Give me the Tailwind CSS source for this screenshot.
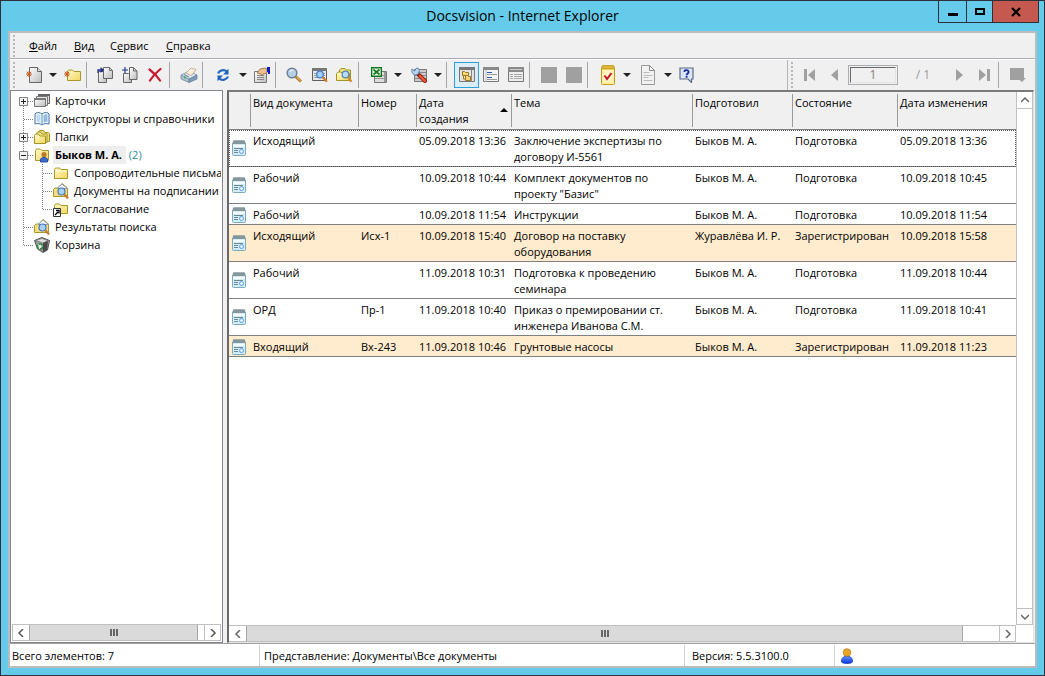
<!DOCTYPE html>
<html lang="ru">
<head>
<meta charset="utf-8">
<title>Docsvision - Internet Explorer</title>
<script src="https://cdn.jsdelivr.net/npm/@tailwindcss/browser@4"></script>
</head>
<body class="h-screen overflow-hidden font-['Open_Sans','Noto_Sans',sans-serif] text-[11px] leading-4 text-black">

<svg class="absolute h-0 w-0" aria-hidden="true" xmlns="http://www.w3.org/2000/svg">
  <defs>
    <linearGradient id="gFolder" x1="0" y1="0" x2="1" y2="1"><stop offset="0" stop-color="#fffbc8"/><stop offset="1" stop-color="#f2d662"/></linearGradient>
    <linearGradient id="gGray" x1="0" y1="0" x2="1" y2="1"><stop offset="0" stop-color="#fff"/><stop offset="1" stop-color="#bdbdbd"/></linearGradient>
    <linearGradient id="gBlue" x1="0" y1="0" x2="0" y2="1"><stop offset="0" stop-color="#5b8cff"/><stop offset="1" stop-color="#0a35d8"/></linearGradient>
  </defs>
  <!-- Tree guides -->
  <symbol id="g-first" viewBox="0 0 24 18"><path d="M12.5 14v4M17 9.500h7" stroke="#808080" stroke-dasharray="1 1" fill="none"/><path d="M8.500 5.500h8v8h-8z" fill="#f2f2f2" stroke="#848484"/><path d="M10 9.500h5M12.500 7v5" stroke="#222"/></symbol>
  <symbol id="g-plus" viewBox="0 0 24 18"><path d="M12.500 0v5M12.500 14v4M17 9.500h7" stroke="#808080" stroke-dasharray="1 1" fill="none"/><path d="M8.500 5.500h8v8h-8z" fill="#f2f2f2" stroke="#848484"/><path d="M10 9.500h5M12.500 7v5" stroke="#222"/></symbol>
  <symbol id="g-minus" viewBox="0 0 24 18"><path d="M12.500 0v5M12.500 14v4M17 9.500h7" stroke="#808080" stroke-dasharray="1 1" fill="none"/><path d="M8.500 5.500h8v8h-8z" fill="#f2f2f2" stroke="#848484"/><path d="M10 9.500h5" stroke="#222"/></symbol>
  <symbol id="g-mid" viewBox="0 0 24 18"><path d="M12.500 0v18M13 9.500h11" stroke="#808080" stroke-dasharray="1 1" fill="none"/></symbol>
  <symbol id="g-end" viewBox="0 0 24 18"><path d="M12.500 0v10M13 9.500h11" stroke="#808080" stroke-dasharray="1 1" fill="none"/></symbol>
  <symbol id="g-sub" viewBox="0 0 43 18"><path d="M12.500 0v18M31.500 0v18M32 9.500h11" stroke="#808080" stroke-dasharray="1 1" fill="none"/></symbol>
  <symbol id="g-subend" viewBox="0 0 43 18"><path d="M12.500 0v18M31.500 0v10M32 9.500h11" stroke="#808080" stroke-dasharray="1 1" fill="none"/></symbol>
  <!-- Tree icons -->
  <symbol id="cards" viewBox="0 0 16 16"><path d="M4.500 1.500h11v9h-11z" fill="#ddd" stroke="#666"/><path d="M4 1h12v2H4z" fill="#666"/><path d="M2.500 3.500h11v9h-11z" fill="#e8e8e8" stroke="#777"/><path d="M.5 5.500h11v8H.5z" fill="url(#gGray)" stroke="#777"/><path d="M0 5h12v2H0z" fill="#777"/></symbol>
  <symbol id="book" viewBox="0 0 16 16"><path d="M1 3l1-1c2-.8 4-.5 6 1 2-1.500 4-1.800 6-1l1 1v10c-3-.8-5-.5-7 1-2-1.500-4-1.800-7-1z" fill="#fff" stroke="#3e6fa5"/><path d="M2.500 3.500c2-.5 3 0 4 .8v7.500c-1-.7-2.500-1-4-.8z" fill="#b9dcf5"/><path d="M9.500 4.300c1-.8 2-1.200 4-.8V11c-1.500-.2-3 .1-4 .8z" fill="#8fbde6"/><path d="M8 3v11" stroke="#5b87b4"/></symbol>
  <symbol id="folders" viewBox="0 0 16 16"><path d="M4.500 12.500V3l1-1.500h4l1.500 2h3.500l1 1v8z" fill="#efe07c" stroke="#a39426"/><path d="M2.500 13.500V4.500l1-1.500h3l1.500 2h5v8.500z" fill="#f6e98e" stroke="#a39426"/><path d="M.5 14.500V6.500L1.500 5h3L6 7h5.500v7.500z" fill="url(#gFolder)" stroke="#a39426"/></symbol>
  <symbol id="folder" viewBox="0 0 16 16"><path d="M1.500 13.500V4.500l1-1.500h4l1.500 1.500h6.500v9z" fill="url(#gFolder)" stroke="#a8982a"/><path d="M3 6h10.500" stroke="#fffde0"/></symbol>
  <symbol id="userfolder" viewBox="0 0 16 16"><path d="M1.500 13.500V3.500L2.500 2h4L8 3.500h6.500v10z" fill="url(#gFolder)" stroke="#a8982a"/><circle cx="10" cy="7.500" r="2.600" fill="#bd7a2a"/><path d="M6.500 15v-2c0-1.800 1.500-2.500 3.500-2.500s3.500.7 3.500 2.500v2z" fill="#3c6bd0" stroke="#2a4fa0"/></symbol>
  <symbol id="searchfolder" viewBox="0 0 16 16"><path d="M.5 13.500V6.500L2 5h3l4-4.500L14.500 5v8.500z" fill="#f3df80" stroke="#a8982a"/><path d="M4 5.500l5-4.500 5.500 4.500z" fill="#f6f8fb" stroke="#8e9bb0"/><circle cx="8.500" cy="8.500" r="3.500" fill="#a9d0f8" stroke="#4b76b8" stroke-width="1.200"/><path d="M11.500 11.500l3.500 4" stroke="#c8772a" stroke-width="2"/></symbol>
  <symbol id="linkfolder" viewBox="0 0 16 16"><path d="M1.500 12.500V4.500l1-1.500h4l1.500 1.500h6.500v8z" fill="url(#gFolder)" stroke="#a8982a"/><path d="M.5 7.500h7v8h-7z" fill="#fff" stroke="#333"/><path d="M2 14l3-3M3 9.500h3v3" stroke="#000" stroke-width="1.300" fill="none"/></symbol>
  <symbol id="bin" viewBox="0 0 16 16"><path d="M.5 3.500L8 .5l7.500 3L13.500 13 9 15.500 3.500 12z" fill="#9a9a9a" stroke="#555"/><path d="M1.500 3.500L8 1.500l6 2-5 2.500z" fill="#dedede" stroke="#666" stroke-width=".6"/><path d="M9 6l5-2-1 9-4 2z" fill="#484848"/><circle cx="6" cy="9.500" r="2.500" fill="#e8e8e8" stroke="#248b3c" stroke-width="1.500" stroke-dasharray="4 1.200"/></symbol>
  <!-- Table icon -->
  <symbol id="row" viewBox="0 0 14 16"><path d="M.5 3.500h13v11q0 1-1 1h-11q-1 0-1-1z" fill="#d3edf7" stroke="#7eaabb"/><path d="M1 1q0-.8 1-.8h10q1 0 1 .8l.8 3.300H.2z" fill="#82989e"/><path d="M1 4.500h12v2.500H1z" fill="#f5fcff"/><path d="M2 8.500h9M2 10.500h4M2 12.500h4" stroke="#6f878f"/><circle cx="9.500" cy="11.500" r="2" fill="#e5f3ff" stroke="#5a9df5"/></symbol>
  <!-- Toolbar icons -->
  <symbol id="newdoc" viewBox="0 0 16 16"><path d="M3.500.5h8l4 4v11h-12z" fill="url(#gGray)" stroke="#666"/><path d="M11.500.5v4h4" fill="#ddd" stroke="#666"/><path d="M0 7h6M3 4v6M.8 4.800l4.400 4.400M5.200 4.800L.8 9.200" stroke="#c85a20"/></symbol>
  <symbol id="newfolder" viewBox="0 0 18 16"><path d="M3.500 13.500V4.500L4.500 3h4L10 4.500h6.500v9z" fill="url(#gFolder)" stroke="#a8982a"/><path d="M0 7h6M3 4v6M.8 4.800l4.400 4.400M5.200 4.800L.8 9.200" stroke="#c85a20"/></symbol>
  <symbol id="copyto" viewBox="0 0 16 16"><path d="M1.500 4.500h5l3 3v8h-8z" fill="url(#gGray)" stroke="#666"/><path d="M6.500.5h6l3 3v8h-9z" fill="url(#gGray)" stroke="#666"/><path d="M12.500.5v3h3" fill="none" stroke="#777"/><path d="M1 6V3h4M3.500.8L6 3 3.500 5.200" stroke="#1e2a8a" stroke-width="1.300" fill="none"/></symbol>
  <symbol id="copyadd" viewBox="0 0 16 16"><path d="M1.500 6.500h5l3 3v6h-8z" fill="url(#gGray)" stroke="#666"/><path d="M7.500.5h4l3.500 3.500v8.500H7.500z" fill="url(#gGray)" stroke="#666"/><path d="M11.500.5v3.500h3.500" fill="none" stroke="#666"/><path d="M0 3h6M3 0v6" stroke="#1e3a9a" stroke-width="1.200"/></symbol>
  <symbol id="del" viewBox="0 0 14 14"><path d="M1.500 1.500c4 3 7.500 6.500 10.500 11M12.500 1C8 4.500 4.500 8.500 2 12.500" stroke="#c81832" stroke-width="2.200" stroke-linecap="round" fill="none"/></symbol>
  <symbol id="print" viewBox="0 0 18 16"><path d="M1 8l8-4 8 4-8 4.500z" fill="#dbe6f0" stroke="#7890a8" stroke-width=".8"/><path d="M1 8v4l8 3.500V12z" fill="#aebfce" stroke="#7890a8" stroke-width=".8"/><path d="M17 8v4l-8 3.500V12z" fill="#7f9bb8" stroke="#65809c" stroke-width=".8"/><path d="M6 6l5-5 5 1.500-4.500 6z" fill="#fbeedc" stroke="#c0a080" stroke-width=".8"/><path d="M4 7.500l5 2.500" stroke="#5d7890"/><circle cx="5" cy="10.500" r="1" fill="#2fae3a"/></symbol>
  <symbol id="refresh" viewBox="0 0 14 14"><path d="M2 5.500C3 2.500 8 1 11 3.500M12 8.500c-1 3-6 4.500-9 2" stroke="#2468c0" stroke-width="2.200" fill="none"/><path d="M12.500.8v5.700H7zM1.500 13.200V7.500H7z" fill="#1f5fb8"/></symbol>
  <symbol id="props" viewBox="0 0 16 16"><path d="M.5 4.500h12v11H.5z" fill="url(#gGray)" stroke="#777"/><path d="M3 8.500h7M3 10.500h7M3 12.500h7" stroke="#888"/><path d="M3 6l3-4 5-1 2 1v4l-4 1-1 2-1-2z" fill="#edc08c" stroke="#9a6a3a" stroke-width=".8"/><path d="M13 0h3v7h-2V5h-1z" fill="#0a1cd8"/></symbol>
  <symbol id="zoom" viewBox="0 0 16 16"><circle cx="6" cy="6" r="4.800" fill="#b5cfe8" stroke="#6f7f93" stroke-width="1.500"/><path d="M3.500 5c.5-1.500 2-2 3.500-1.700" stroke="#fff" fill="none"/><path d="M9.500 9.500l5.500 5" stroke="#b07828" stroke-width="3"/><path d="M10.500 10l4 3.800" stroke="#f3c87a"/></symbol>
  <symbol id="zoomwin" viewBox="0 0 16 16"><path d="M.5 1.500h14v12H.5z" fill="#e8e8e8" stroke="#5e5e5e"/><path d="M0 1h15v3H0z" fill="#777"/><path d="M2 6.500h11M2 8.500h11M2 10.500h11" stroke="#999"/><circle cx="8" cy="7.500" r="3.300" fill="#9fd0ff" stroke="#4a80c8" stroke-width="1.300"/><path d="M10.800 10.300l4 4.500" stroke="#d87a20" stroke-width="2.200"/></symbol>
  <symbol id="zoomfolder" viewBox="0 0 17 16"><path d="M3.500 12.500V3L5 1.500h4L10.500 3h4v9z" fill="#efe07c" stroke="#a39426"/><path d="M.5 13.500V6.500L2 5h3l1.500 1.500h7v7z" fill="url(#gFolder)" stroke="#a39426"/><circle cx="9.500" cy="7.500" r="3.300" fill="#b7dcff" stroke="#5a86b8" stroke-width="1.300"/><path d="M12 10.300l3.500 4.500" stroke="#d8862a" stroke-width="2.200"/></symbol>
  <symbol id="excel" viewBox="0 0 16 16"><path d="M3.500 4.500h12v11h-12z" fill="#ddd" stroke="#777"/><path d="M4 8.500h11M4 11.500h11" stroke="#999"/><path d="M13 5h2v10h-2z" fill="#999"/><path d="M.7.7h9.600v8.600H.7z" fill="#fff" stroke="#0a7a18" stroke-width="1.400"/><path d="M2.500 2.500l6 5M8.500 2.500l-6 5" stroke="#0f7a1c" stroke-width="1.700"/></symbol>
  <symbol id="tools" viewBox="0 0 17 16"><path d="M3.500 2.500h12v12h-12z" fill="#ccc" stroke="#777"/><path d="M4 5.500h11M4 8.500h11M4 11.500h11" stroke="#888"/><path d="M8 8l6 6" stroke="#9b2014" stroke-width="4" stroke-linecap="round"/><path d="M9 9l5 5" stroke="#ee5b42" stroke-width="2.200" stroke-linecap="round"/><path d="M1 2l2.500 2L5.500 1C8 1 9 3 8 5L7 7 5 8C2.500 8 0 6 1 2z" fill="#b8d5ee" stroke="#587ea8"/></symbol>
  <symbol id="treeview" viewBox="0 0 16 16"><path d="M.5.500h15v14H.5z" fill="#e2e2e2" stroke="#777"/><path d="M0 0h16v3H0z" fill="#777"/><path d="M12.500 3v12" stroke="#888"/><path d="M3.500 8.500v-4h2l1 1h3v3zM6.500 13.500v-5h2l1 1h2v4z" fill="#f7d774" stroke="#a07a20"/><path d="M4.500 8.500v3.500h2" stroke="#a07a20" fill="none"/></symbol>
  <symbol id="listview" viewBox="0 0 16 16"><path d="M.5.500h15v14H.5z" fill="#f5f5f5" stroke="#777"/><path d="M0 0h16v3H0z" fill="#8a8a8a"/><path d="M3 3v12" stroke="#bbb"/><path d="M4 5.500h5M4 10.500h5" stroke="#2c55b0"/><path d="M4 7.500h10M4 12.500h10" stroke="#999"/></symbol>
  <symbol id="tableview" viewBox="0 0 16 16"><path d="M.5.500h15v14H.5z" fill="#ededed" stroke="#777"/><path d="M0 0h16v5H0z" fill="#8a8a8a"/><path d="M2 2.500h12" stroke="#ccc"/><path d="M2 7.500h3M6 7.500h8M2 9.500h3M6 9.500h8M2 11.500h3M6 11.500h8" stroke="#aaa"/></symbol>
  <symbol id="block" viewBox="0 0 16 16"><path d="M0 0h16v16H0z" fill="#a0a0a0"/></symbol>
  <symbol id="task" viewBox="0 0 14 20"><rect x=".5" y="2.500" width="13" height="17" rx="1" fill="#ffec94" stroke="#c99a18"/><path d="M2 5h10v12.500H2z" fill="#fff6bd"/><rect x="1" y=".5" width="12" height="3.500" rx="1" fill="#e0b830" stroke="#b88a18" stroke-width=".7"/><path d="M3.500 10.500L6 14l4.500-6" stroke="#c41430" stroke-width="2" fill="none"/></symbol>
  <symbol id="page" viewBox="0 0 14 20"><path d="M.5.500h8l5 5v14H.5z" fill="#f2f2f2" stroke="#999"/><path d="M8.500.5v5h5z" fill="#fff" stroke="#888"/><path d="M2.500 7.500h6M2.500 10.500h9M2.500 12.500h5M2.500 15.500h9" stroke="#bbb"/></symbol>
  <symbol id="help" viewBox="0 0 15 16"><path d="M1 1h13v11h-1.500v3.500L9 12H1z" fill="#dce6f7" stroke="#5c6c84" stroke-width="1.200"/><path d="M5.300 4.800C5.500 2.500 9.700 2.600 9.600 5c0 1.500-2 1.500-2 3.200M7.600 9v1.800" stroke="#1428a8" stroke-width="1.800" fill="none"/></symbol>
  <symbol id="more" viewBox="0 0 16 16"><path d="M0 1h14v10h2l-4 4-2.500-2H0z" fill="#a0a0a0"/></symbol>
  <symbol id="dd" viewBox="0 0 8 4"><path d="M0 0h8L4 4z" fill="#222"/></symbol>
  <symbol id="user" viewBox="0 0 12 16"><path d="M.5 14c-.5-3 1.500-5 3-5.500h5c1.500.5 3.500 2.500 3 5.500-2 2-9 2-11 0z" fill="url(#gBlue)" stroke="#1238b0" stroke-width=".7"/><circle cx="6" cy="4.500" r="3.800" fill="#e8a528" stroke="#b87a14" stroke-width=".7"/></symbol>
</svg>

<div class="flex h-full flex-col border border-[#2d3038] bg-[#66cbea]">
  <header class="relative flex h-[30px] shrink-0 items-center justify-center">
    <h1 class="text-[14px] leading-5">Docsvision - Internet Explorer</h1>
    <div class="absolute -top-px right-[5px] flex h-[23px] border border-[#2d3038]">
      <button aria-label="Свернуть" class="flex w-7 items-center justify-center border-r border-[#2d3038]"><svg class="h-4 w-4"><path d="M3 9h10v3H3z"/></svg></button>
      <button aria-label="Развернуть" class="flex w-[26px] items-center justify-center border-r border-[#2d3038]"><svg class="h-4 w-4"><path d="M4 5h8v5H4z" fill="none" stroke="#000" stroke-width="2"/></svg></button>
      <button aria-label="Закрыть" class="flex w-[45px] items-center justify-center bg-[#c5594f]"><svg class="h-4 w-4"><path d="M4 4l8 8M12 4l-8 8" stroke="#000" stroke-width="2.200"/></svg></button>
    </div>
  </header>

  <div class="mx-[7px] mb-[7px] flex min-h-0 flex-1 flex-col border-2 border-[#b9bdc0] bg-[#f0f0f0]">
    <nav class="flex h-[26px] shrink-0 items-center border-b border-[#a9adb3] pl-[3px]">
      <span class="mr-[13px] h-[22px] border-l-2 border-dotted border-[#b8b8b8]"></span>
      <button class="w-[46px] pl-px text-left"><u>Ф</u>айл</button>
      <button class="w-9 text-left"><u>В</u>ид</button>
      <button class="w-14 text-left">С<u>е</u>рвис</button>
      <button class="text-left"><u>С</u>правка</button>
    </nav>

    <div class="flex h-[31px] shrink-0 items-center border-t border-white pl-[3px]" role="toolbar">
      <span class="mr-[7px] h-[26px] border-l-2 border-dotted border-[#b8b8b8]"></span>
      <div class="flex items-center">
        <button aria-label="Создать" class="flex w-6 justify-center"><svg class="h-4 w-4"><use href="#newdoc"/></svg></button>
        <button aria-label="Меню создания" class="flex w-[14px] justify-center"><svg class="h-1 w-2"><use href="#dd"/></svg></button>
        <button aria-label="Новая папка" class="flex w-[26px] justify-center"><svg class="h-4 w-[18px]"><use href="#newfolder"/></svg></button>
      </div>
      <span class="h-[26px] w-px bg-[#a5a5a5]"></span>
      <div class="flex items-center pl-[6px] pr-px">
        <button aria-label="Копировать в" class="flex w-[25px] justify-center pr-px"><svg class="h-4 w-4"><use href="#copyto"/></svg></button>
        <button aria-label="Добавить копию" class="flex w-[25px] justify-center pr-px"><svg class="h-4 w-4"><use href="#copyadd"/></svg></button>
        <button aria-label="Удалить" class="flex w-[25px] justify-center pr-px"><svg class="h-[14px] w-[14px]"><use href="#del"/></svg></button>
      </div>
      <span class="h-[26px] w-px bg-[#a5a5a5]"></span>
      <button aria-label="Печать" class="ml-[7px] flex w-[25px] justify-center pr-px"><svg class="h-4 w-[18px]"><use href="#print"/></svg></button>
      <span class="h-[26px] w-px bg-[#a5a5a5]"></span>
      <div class="flex items-center pl-2">
        <button aria-label="Обновить" class="flex w-6 justify-center"><svg class="h-[14px] w-[14px]"><use href="#refresh"/></svg></button>
        <button aria-label="Меню обновления" class="flex w-4 justify-center"><svg class="h-1 w-2"><use href="#dd"/></svg></button>
        <button aria-label="Свойства" class="flex w-6 justify-center pr-[2px]"><svg class="h-4 w-4"><use href="#props"/></svg></button>
      </div>
      <span class="h-[26px] w-px bg-[#a5a5a5]"></span>
      <div class="flex items-center pl-[6px] pr-px">
        <button aria-label="Поиск" class="flex w-[25px] justify-center pr-px"><svg class="h-4 w-4"><use href="#zoom"/></svg></button>
        <button aria-label="Поиск в представлении" class="flex w-[25px] justify-center"><svg class="h-4 w-4"><use href="#zoomwin"/></svg></button>
        <button aria-label="Поиск в папке" class="flex w-[25px] justify-center"><svg class="h-4 w-[17px]"><use href="#zoomfolder"/></svg></button>
      </div>
      <span class="h-[26px] w-px bg-[#a5a5a5]"></span>
      <div class="flex items-center pl-[7px] pr-1">
        <button aria-label="Экспорт в Excel" class="flex w-[26px] justify-center"><svg class="h-4 w-4"><use href="#excel"/></svg></button>
        <button aria-label="Меню экспорта" class="flex w-3 justify-center"><svg class="h-1 w-2"><use href="#dd"/></svg></button>
        <button aria-label="Инструменты" class="flex w-[30px] justify-center"><svg class="h-4 w-[17px]"><use href="#tools"/></svg></button>
        <button aria-label="Меню инструментов" class="flex w-2 justify-center"><svg class="h-1 w-2"><use href="#dd"/></svg></button>
      </div>
      <span class="h-[26px] w-px bg-[#a5a5a5]"></span>
      <div class="flex items-center pl-[7px]">
        <button aria-label="Дерево папок" aria-pressed="true" class="flex h-[26px] w-[25px] items-center justify-center border border-[#2ba0da] bg-[#dcedfa]"><svg class="h-4 w-4"><use href="#treeview"/></svg></button>
        <button aria-label="Список" class="flex w-[25px] justify-center pr-px"><svg class="h-4 w-4"><use href="#listview"/></svg></button>
        <button aria-label="Таблица" class="flex w-[25px] justify-center pr-px"><svg class="h-4 w-4"><use href="#tableview"/></svg></button>
      </div>
      <span class="h-[26px] w-px bg-[#a5a5a5]"></span>
      <div class="flex items-center pl-[7px]">
        <button aria-label="Действие 1" disabled class="flex w-[25px] justify-center pr-px"><svg class="h-4 w-4"><use href="#block"/></svg></button>
        <button aria-label="Действие 2" disabled class="flex w-[25px] justify-center pr-px"><svg class="h-4 w-4"><use href="#block"/></svg></button>
      </div>
      <span class="h-[26px] w-px bg-[#a5a5a5]"></span>
      <div class="flex items-center pl-2">
        <button aria-label="Задание" class="flex w-6 justify-center"><svg class="h-5 w-[14px]"><use href="#task"/></svg></button>
        <button aria-label="Меню заданий" class="flex w-[14px] justify-center"><svg class="h-1 w-2"><use href="#dd"/></svg></button>
        <button aria-label="Документ" class="flex w-7 justify-center"><svg class="h-5 w-[14px]"><use href="#page"/></svg></button>
        <button aria-label="Меню документа" class="flex w-3 justify-center"><svg class="h-1 w-2"><use href="#dd"/></svg></button>
        <button aria-label="Справка" class="flex w-[26px] justify-center pr-px"><svg class="h-4 w-[15px]"><use href="#help"/></svg></button>
      </div>
      <div class="ml-auto flex h-full items-center border-l border-[#b4b8bd] pl-[3px]">
        <span class="h-[26px] border-l-2 border-dotted border-[#b8b8b8]"></span>
        <button aria-label="Первая" disabled class="flex w-8 justify-center"><svg class="h-3 w-[11px]"><path d="M0 0h3v12H0zM11 0v12L4 6z" fill="#a0a0a0"/></svg></button>
        <button aria-label="Предыдущая" disabled class="flex w-5 justify-center pr-px"><svg class="h-3 w-[7px]"><path d="M7 0v12L0 6z" fill="#a0a0a0"/></svg></button>
        <div class="ml-[3px] border border-[#abadb3] p-px">
          <input aria-label="Страница" value="1" class="block h-4 w-[46px] border border-[#e3e3e3] border-t-[#696969] border-l-[#696969] bg-[#f0f0f0] text-center text-[12px] leading-4 text-[#808080]">
        </div>
        <span class="w-[50px] text-center text-[12px] text-[#9a9a9a]">/ 1</span>
        <button aria-label="Следующая" disabled class="flex w-6 justify-center pr-px"><svg class="h-3 w-[7px]"><path d="M0 0v12l7-6z" fill="#a0a0a0"/></svg></button>
        <button aria-label="Последняя" disabled class="flex w-[26px] justify-center pr-px"><svg class="h-3 w-[11px]"><path d="M8 0h3v12H8zM0 0v12l7-6z" fill="#a0a0a0"/></svg></button>
        <span class="h-[26px] w-px bg-[#a5a5a5]"></span>
        <button aria-label="Ещё" disabled class="flex w-9 justify-center pl-[2px]"><svg class="h-4 w-4"><use href="#more"/></svg></button>
      </div>
    </div>

    <main class="flex min-h-0 flex-1 gap-1 pr-px">
      <aside class="flex w-[213px] shrink-0 flex-col border border-[#828790] bg-white p-px">
        <ul class="min-h-0 flex-1 overflow-hidden whitespace-nowrap">
          <li class="flex h-[18px] items-center"><svg class="h-[18px] w-[22px] shrink-0" viewBox="1 0 22 18"><use href="#g-first" width="24" height="18"/></svg><svg class="mr-[5px] h-4 w-4 shrink-0"><use href="#cards"/></svg><a href="#">Карточки</a></li>
          <li class="flex h-[18px] items-center"><svg class="h-[18px] w-[22px] shrink-0" viewBox="1 0 22 18"><use href="#g-mid" width="24" height="18"/></svg><svg class="mr-[5px] h-4 w-4 shrink-0"><use href="#book"/></svg><a href="#">Конструкторы и справочники</a></li>
          <li class="flex h-[18px] items-center"><svg class="h-[18px] w-[22px] shrink-0" viewBox="1 0 22 18"><use href="#g-plus" width="24" height="18"/></svg><svg class="mr-[5px] h-4 w-4 shrink-0"><use href="#folders"/></svg><a href="#">Папки</a></li>
          <li class="flex h-[18px] items-center"><svg class="h-[18px] w-[22px] shrink-0" viewBox="1 0 22 18"><use href="#g-minus" width="24" height="18"/></svg><svg class="mr-[3px] h-4 w-4 shrink-0"><use href="#userfolder"/></svg><a href="#" class="bg-[#eeeeee] pr-1 pl-[2px] leading-[18px] font-bold">Быков М. А.</a><span class="ml-[3px] text-[#2b8f96]">(2)</span></li>
          <li class="flex h-[18px] items-center"><svg class="h-[18px] w-[41px] shrink-0" viewBox="1 0 41 18"><use href="#g-sub" width="43" height="18"/></svg><svg class="mr-[5px] h-4 w-4 shrink-0"><use href="#folder"/></svg><a href="#">Сопроводительные письма</a></li>
          <li class="flex h-[18px] items-center"><svg class="h-[18px] w-[41px] shrink-0" viewBox="1 0 41 18"><use href="#g-sub" width="43" height="18"/></svg><svg class="mr-[5px] h-4 w-4 shrink-0"><use href="#searchfolder"/></svg><a href="#">Документы на подписании</a></li>
          <li class="flex h-[18px] items-center"><svg class="h-[18px] w-[41px] shrink-0" viewBox="1 0 41 18"><use href="#g-subend" width="43" height="18"/></svg><svg class="mr-[5px] h-4 w-4 shrink-0"><use href="#linkfolder"/></svg><a href="#">Согласование</a></li>
          <li class="flex h-[18px] items-center"><svg class="h-[18px] w-[22px] shrink-0" viewBox="1 0 22 18"><use href="#g-mid" width="24" height="18"/></svg><svg class="mr-[5px] h-4 w-4 shrink-0"><use href="#searchfolder"/></svg><a href="#">Результаты поиска</a></li>
          <li class="flex h-[18px] items-center"><svg class="h-[18px] w-[22px] shrink-0" viewBox="1 0 22 18"><use href="#g-end" width="24" height="18"/></svg><svg class="mr-[5px] h-4 w-4 shrink-0"><use href="#bin"/></svg><a href="#">Корзина</a></li>
        </ul>
        <div class="flex h-[17px] shrink-0 border border-[#c0c0c0] bg-white">
          <button aria-label="Влево" class="flex w-4 items-center justify-center"><svg class="h-2 w-2"><path d="M6 0L2 4l4 4" fill="none" stroke="#555" stroke-width="1.500"/></svg></button>
          <div class="flex flex-1 items-center justify-center border border-y-0 border-[#a6a6a6] bg-[#dadada]"><svg class="h-[7px] w-2"><path d="M1 0v7M4 0v7M7 0v7" stroke="#666" stroke-width="2"/></svg></div>
          <button aria-label="Вправо" class="ml-[6px] flex w-4 items-center justify-center border-l border-[#c0c0c0]"><svg class="h-2 w-2"><path d="M2 0l4 4-4 4" fill="none" stroke="#555" stroke-width="1.500"/></svg></button>
        </div>
      </aside>

      <section class="flex min-w-0 flex-1 flex-col border-2 border-r border-b border-[#696969] border-t-[#7a7a7a] border-r-[#e3e3e3] border-b-[#e3e3e3] bg-white">
        <div class="flex min-h-0 flex-1">
          <div class="min-w-0 flex-1 overflow-hidden">
            <table class="w-full table-fixed border-separate border-spacing-0 text-left [&_td]:border-b [&_td]:border-[#808080] [&_td]:pt-[3px] [&_td]:pb-px [&_td]:pl-[2px] [&_td]:align-top [&_td]:whitespace-nowrap [&_th]:h-[38px] [&_th]:border-b [&_th]:border-[#808080] [&_th]:p-0 [&_th]:font-normal">
              <colgroup><col class="w-[22px]"><col class="w-[108px]"><col class="w-[58px]"><col class="w-[95px]"><col class="w-[181px]"><col class="w-[100px]"><col class="w-[105px]"><col></colgroup>
              <thead class="bg-[#f0f0f0]">
                <tr>
                  <th><div class="h-[33px] border-r border-[#9a9a9a] pt-px"></div></th>
                  <th><div class="h-[33px] border-r border-[#9a9a9a] pt-px pl-[2px]">Вид документа</div></th>
                  <th><div class="h-[33px] border-r border-[#9a9a9a] pt-px pl-[2px]">Номер</div></th>
                  <th><div class="relative h-[33px] border-r border-[#9a9a9a] pt-px pl-[2px]">Дата<br>создания<svg class="absolute top-[14px] right-[3px] h-1 w-2"><path d="M4 0l4 4H0z"/></svg></div></th>
                  <th><div class="h-[33px] border-r border-[#9a9a9a] pt-px pl-[2px]">Тема</div></th>
                  <th><div class="h-[33px] border-r border-[#9a9a9a] pt-px pl-[2px]">Подготовил</div></th>
                  <th><div class="h-[33px] border-r border-[#9a9a9a] pt-px pl-[2px]">Состояние</div></th>
                  <th><div class="h-[33px] pt-px pl-[2px]">Дата изменения</div></th>
                </tr>
              </thead>
              <tbody>
                <tr class="outline-1 -outline-offset-1 outline-dotted outline-[#555555]">
                  <td><svg class="mt-[7px] ml-px h-4 w-[14px]"><use href="#row"/></svg></td><td>Исходящий</td><td></td><td>05.09.2018 13:36</td><td>Заключение экспертизы по<br>договору И-5561</td><td>Быков М. А.</td><td>Подготовка</td><td>05.09.2018 13:36</td>
                </tr>
                <tr>
                  <td><svg class="mt-[7px] ml-px h-4 w-[14px]"><use href="#row"/></svg></td><td>Рабочий</td><td></td><td>10.09.2018 10:44</td><td>Комплект документов по<br>проекту "Базис"</td><td>Быков М. А.</td><td>Подготовка</td><td>10.09.2018 10:45</td>
                </tr>
                <tr>
                  <td><svg class="ml-px h-4 w-[14px]"><use href="#row"/></svg></td><td>Рабочий</td><td></td><td>10.09.2018 11:54</td><td>Инструкции</td><td>Быков М. А.</td><td>Подготовка</td><td>10.09.2018 11:54</td>
                </tr>
                <tr class="bg-[#ffebcd]">
                  <td><svg class="mt-[7px] ml-px h-4 w-[14px]"><use href="#row"/></svg></td><td>Исходящий</td><td>Исх-1</td><td>10.09.2018 15:40</td><td>Договор на поставку<br>оборудования</td><td>Журавлёва И. Р.</td><td>Зарегистрирован</td><td>10.09.2018 15:58</td>
                </tr>
                <tr>
                  <td><svg class="mt-[7px] ml-px h-4 w-[14px]"><use href="#row"/></svg></td><td>Рабочий</td><td></td><td>11.09.2018 10:31</td><td>Подготовка к проведению<br>семинара</td><td>Быков М. А.</td><td>Подготовка</td><td>11.09.2018 10:44</td>
                </tr>
                <tr>
                  <td><svg class="mt-[7px] ml-px h-4 w-[14px]"><use href="#row"/></svg></td><td>ОРД</td><td>Пр-1</td><td>11.09.2018 10:40</td><td>Приказ о премировании ст.<br>инженера Иванова С.М.</td><td>Быков М. А.</td><td>Подготовка</td><td>11.09.2018 10:41</td>
                </tr>
                <tr class="bg-[#ffebcd]">
                  <td><svg class="ml-px h-4 w-[14px]"><use href="#row"/></svg></td><td>Входящий</td><td>Вх-243</td><td>11.09.2018 10:46</td><td>Грунтовые насосы</td><td>Быков М. А.</td><td>Зарегистрирован</td><td>11.09.2018 11:23</td>
                </tr>
              </tbody>
            </table>
          </div>
          <div class="flex w-[17px] shrink-0 flex-col justify-between border border-t-0 border-[#c0c0c0]">
            <button aria-label="Вверх" class="flex h-[17px] items-center justify-center border-b border-[#c0c0c0]"><svg class="h-2 w-2"><path d="M0 6l4-4 4 4" fill="none" stroke="#666" stroke-width="1.500"/></svg></button>
            <button aria-label="Вниз" class="flex h-4 items-center justify-center border-t border-[#c0c0c0]"><svg class="h-2 w-2"><path d="M0 2l4 4 4-4" fill="none" stroke="#666" stroke-width="1.500"/></svg></button>
          </div>
        </div>
        <div class="mr-[17px] flex h-[17px] shrink-0 border border-l-0 border-[#c0c0c0]">
          <button aria-label="Влево" class="flex w-[17px] items-center justify-center"><svg class="h-2 w-2"><path d="M6 0L2 4l4 4" fill="none" stroke="#666" stroke-width="1.500"/></svg></button>
          <div class="flex flex-1 items-center justify-center border-x border-[#a6a6a6] bg-[#dadada]"><svg class="h-[7px] w-2"><path d="M1 0v7M4 0v7M7 0v7" stroke="#666" stroke-width="2"/></svg></div>
          <button aria-label="Вправо" class="ml-9 flex w-4 items-center justify-center border-l border-[#c0c0c0]"><svg class="h-2 w-2"><path d="M2 0l4 4-4 4" fill="none" stroke="#666" stroke-width="1.500"/></svg></button>
        </div>
      </section>
    </main>

    <footer class="flex h-[23px] shrink-0 items-stretch border-t border-[#a0a0a0] bg-white pt-px leading-[22px]">
      <span class="w-[250px] border-r border-[#d4d4d4] pl-[2px]">Всего элементов: 7</span>
      <span class="flex-1 border-r border-[#d4d4d4] pl-1">Представление: Документы\Все документы</span>
      <span class="w-[150px] border-r border-[#d4d4d4] pl-[7px]">Версия: 5.5.3100.0</span>
      <span class="flex w-[200px] items-center pl-[6px]"><svg class="h-4 w-3"><use href="#user"/></svg></span>
    </footer>
  </div>
</div>
</body>
</html>
